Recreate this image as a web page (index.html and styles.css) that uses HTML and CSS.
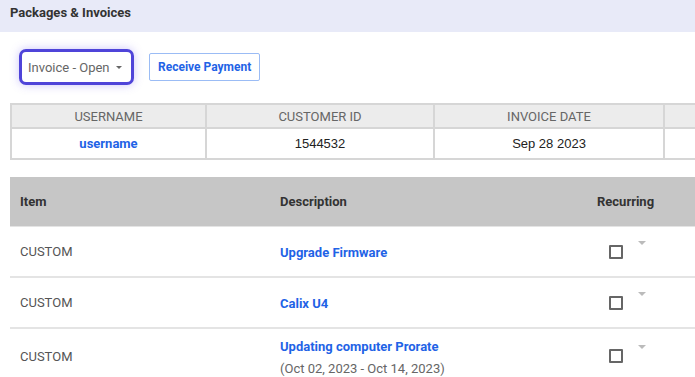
FILE: index.html
```html
<!DOCTYPE html>
<html lang="en">
<head>
    <meta charset="UTF-8">
    <meta name="viewport" content="width=device-width, initial-scale=1.0">
    <title>Packages &amp; Invoices</title>
    <link rel="stylesheet" href="styles.css">
</head>
<body>
    <div class="page-header">Packages &amp; Invoices</div>

    <div class="content">
        <div class="toolbar">
            <button class="status-select">Invoice - Open <span class="caret"></span></button>
            <button class="btn-outline">Receive Payment</button>
        </div>

        <table class="info-table">
            <thead>
                <tr>
                    <th class="col-user">USERNAME</th>
                    <th class="col-cust">CUSTOMER ID</th>
                    <th class="col-date">INVOICE DATE</th>
                    <th></th>
                </tr>
            </thead>
            <tbody>
                <tr>
                    <td><a href="#" class="link">username</a></td>
                    <td>1544532</td>
                    <td>Sep 28 2023</td>
                    <td></td>
                </tr>
            </tbody>
        </table>

        <div class="items">
            <div class="items-row items-head">
                <div>Item</div>
                <div>Description</div>
                <div class="recurring-head">Recurring</div>
            </div>
            <div class="items-row">
                <div class="item-type">CUSTOM</div>
                <div><a href="#" class="link">Upgrade Firmware</a></div>
                <div class="recurring"><span class="checkbox"></span><span class="mini-caret"></span></div>
            </div>
            <div class="items-row">
                <div class="item-type">CUSTOM</div>
                <div><a href="#" class="link">Calix U4</a></div>
                <div class="recurring"><span class="checkbox"></span><span class="mini-caret"></span></div>
            </div>
            <div class="items-row items-row-tall">
                <div class="item-type">CUSTOM</div>
                <div>
                    <a href="#" class="link">Updating computer Prorate</a>
                    <div class="period">(Oct 02, 2023 - Oct 14, 2023)</div>
                </div>
                <div class="recurring"><span class="checkbox"></span><span class="mini-caret"></span></div>
            </div>
        </div>
    </div>
</body>
</html>
```

FILE: styles.css
```css
body {
    margin: 0;
    font-family: Roboto, "Liberation Sans", Arial, sans-serif;
    background-color: #fff;
    overflow: hidden;
    color: #333;
}
.page-header {
    height: 32px;
    line-height: 25px;
    padding-left: 10px;
    background-color: #e8eaf8;
    font-size: 13px;
    font-weight: bold;
    color: #333;
}
.content {
    padding-left: 10px;
}
.toolbar {
    display: flex;
    align-items: flex-start;
    gap: 15px;
    padding: 17px 0 0 9px;
    height: 54px;
    box-sizing: border-box;
}
.status-select {
    height: 36px;
    width: 115px;
    padding: 0 0 0 6px;
    border: 3px solid #4f44d9;
    border-radius: 7px;
    background-color: #fff;
    box-shadow: 0 0 10px rgba(110, 90, 240, 0.35);
    font-family: inherit;
    font-size: 13px;
    color: #666;
    text-align: left;
}
.caret {
    display: inline-block;
    margin-left: 3px;
    vertical-align: 3px;
    border-left: 3.5px solid transparent;
    border-right: 3.5px solid transparent;
    border-top: 3.5px solid #666;
}
.btn-outline {
    margin-top: 4px;
    height: 28px;
    padding: 0 8px;
    border: 1px solid #9bbcf5;
    border-radius: 2px;
    background-color: #fff;
    font-family: inherit;
    font-size: 12px;
    font-weight: bold;
    color: #1f63e6;
}
.info-table {
    margin-top: 17px;
    border-collapse: collapse;
    width: 900px;
}
.info-table th,
.info-table td {
    border: 2px solid #d6d6d6;
    text-align: center;
    padding: 0;
}
.info-table th {
    height: 22px;
    background-color: #ececec;
    font-size: 13px;
    font-weight: normal;
    color: #666;
}
.info-table td {
    height: 29px;
    font-family: "Liberation Sans", Arial, sans-serif;
    font-size: 13px;
    color: #222;
}
.col-user { width: 193px; }
.col-cust { width: 226px; }
.col-date { width: 228px; }
.link {
    font-family: Roboto, "Liberation Sans", sans-serif;
    font-size: 13px;
    font-weight: bold;
    color: #1f63e6;
    text-decoration: none;
}
.items {
    margin-top: 17px;
    width: 900px;
}
.items-row {
    display: grid;
    grid-template-columns: 260px 310px 1fr;
    align-items: center;
    height: 51px;
    border-bottom: 2px solid #e4e4e4;
    box-sizing: border-box;
    padding-left: 10px;
}
.items-row-tall {
    height: 56px;
}
.items-head {
    height: 50px;
    background-color: #c6c6c6;
    border-bottom: 1px solid #e4e4e4;
    font-size: 13px;
    font-weight: bold;
    color: #333;
}
.recurring-head {
    padding-left: 7px;
}
.item-type {
    font-size: 13px;
    color: #555;
}
.period {
    margin-top: 6px;
    font-size: 13px;
    color: #666;
}
.recurring {
    display: flex;
    align-items: center;
    padding-left: 19px;
}
.checkbox {
    display: inline-block;
    width: 10px;
    height: 10px;
    border: 2px solid #666;
    border-radius: 1px;
}
.mini-caret {
    display: inline-block;
    margin-left: 15px;
    align-self: flex-start;
    margin-top: -4px;
    border-left: 4px solid transparent;
    border-right: 4px solid transparent;
    border-top: 4px solid #bbb;
}
```
